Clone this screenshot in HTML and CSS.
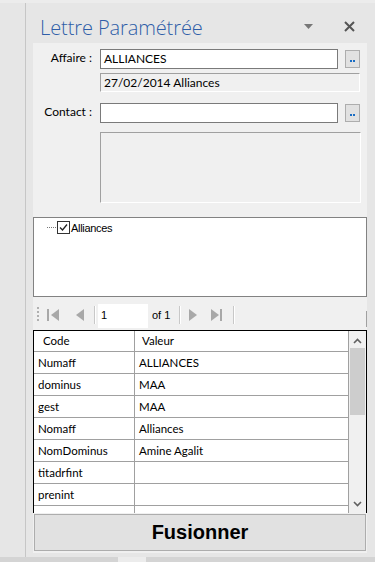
FILE: index.html
```html
<!DOCTYPE html>
<html lang="fr">
<head>
<meta charset="utf-8">
<title>Lettre Paramétrée</title>
<link rel="stylesheet" href="styles.css">
</head>
<body>
<div class="topband"></div>
<div class="app">
  <div class="gutter"></div>
  <div class="vline"></div>
  <div class="pane">
    <div class="pane-head">
      <h1 class="title">Lettre Paramétrée</h1>
      <div class="head-icons">
        <svg class="drop" width="9" height="5" viewBox="0 0 9 5"><path d="M0 0H9L4.5 5Z" fill="#777"/></svg>
        <svg class="close" width="11" height="11" viewBox="0 0 11 11"><path d="M1 1L10 10M10 1L1 10" stroke="#555" stroke-width="2"/></svg>
      </div>
    </div>
    <div class="content">
      <div class="form">
        <div class="frow">
          <label class="flabel">Affaire :</label>
          <div class="finput">ALLIANCES</div>
          <div class="dots-btn"><svg width="5" height="2" viewBox="0 0 5 2"><rect x="0" y="0" width="2" height="2" fill="#1a6dc4"/><rect x="3" y="0" width="2" height="2" fill="#1a6dc4"/></svg></div>
        </div>
        <div class="infobox">27/02/2014 Alliances</div>
        <div class="frow contact">
          <label class="flabel">Contact :</label>
          <div class="finput"></div>
          <div class="dots-btn"><svg width="5" height="2" viewBox="0 0 5 2"><rect x="0" y="0" width="2" height="2" fill="#1a6dc4"/><rect x="3" y="0" width="2" height="2" fill="#1a6dc4"/></svg></div>
        </div>
        <div class="bigbox"></div>
      </div>
      <div class="tree">
        <div class="tree-item">
          <span class="tree-dots"></span>
          <span class="check"><svg width="11" height="11" viewBox="0 0 11 11"><path d="M2 5.5L4.5 8L9 2.5" fill="none" stroke="#222" stroke-width="1.3"/></svg></span>
          <span class="tree-text">Alliances</span>
        </div>
      </div>
      <div class="toolbar">
        <span class="grip"></span>
        <span class="tb-btn first"><svg width="13" height="12" viewBox="0 0 13 12"><rect x="0" y="0" width="2" height="12" fill="#a8a8a8"/><path d="M12 0V12L4 6Z" fill="#a8a8a8"/></svg></span>
        <span class="tb-btn prev"><svg width="8" height="12" viewBox="0 0 8 12"><path d="M8 0V12L0 6Z" fill="#a8a8a8"/></svg></span>
        <span class="tb-sep"></span>
        <span class="tb-page">1</span>
        <span class="tb-of">of 1</span>
        <span class="tb-sep"></span>
        <span class="tb-btn next"><svg width="8" height="12" viewBox="0 0 8 12"><path d="M0 0V12L8 6Z" fill="#a8a8a8"/></svg></span>
        <span class="tb-btn last"><svg width="12" height="12" viewBox="0 0 12 12"><path d="M0 0V12L8 6Z" fill="#a8a8a8"/><rect x="9" y="0" width="2" height="12" fill="#a8a8a8"/></svg></span>
        <span class="tb-sep"></span>
        <span class="tb-end"></span>
      </div>
      <div class="grid">
        <div class="grid-body">
          <div class="grow ghead"><div class="c1">Code</div><div class="c2">Valeur</div></div>
          <div class="grow"><div class="c1">Numaff</div><div class="c2">ALLIANCES</div></div>
          <div class="grow"><div class="c1">dominus</div><div class="c2">MAA</div></div>
          <div class="grow"><div class="c1">gest</div><div class="c2">MAA</div></div>
          <div class="grow"><div class="c1">Nomaff</div><div class="c2">Alliances</div></div>
          <div class="grow"><div class="c1">NomDominus</div><div class="c2">Amine Agalit</div></div>
          <div class="grow"><div class="c1">titadrfint</div><div class="c2"></div></div>
          <div class="grow"><div class="c1">prenint</div><div class="c2"></div></div>
          <div class="grow"><div class="c1"></div><div class="c2"></div></div>
        </div>
        <div class="vscroll">
          <svg class="arr" width="9" height="6" viewBox="0 0 9 6"><path d="M1 5L4.5 1.5L8 5" fill="none" stroke="#606060" stroke-width="1.6"/></svg>
          <div class="thumb"></div>
          <div class="track"></div>
          <svg class="arr" width="9" height="6" viewBox="0 0 9 6"><path d="M1 1L4.5 4.5L8 1" fill="none" stroke="#606060" stroke-width="1.6"/></svg>
        </div>
      </div>
      <button class="merge">Fusionner</button>
    </div>
  </div>
</div>
<div class="bottombar"><span class="bthumb"></span></div>
</body>
</html>
```

FILE: styles.css
```css
* { box-sizing: border-box; }
html, body { margin: 0; padding: 0; }
body {
  width: 375px;
  height: 562px;
  overflow: hidden;
  background: #e6e6e6;
  font-family: Lato, "Open Sans", sans-serif;
  font-size: 12px;
  color: #000;
}
.topband { height: 3px; background: #ececec; }
.app { display: flex; height: 554px; }
.gutter { width: 25px; }
.vline { width: 1px; background: #c6c6c6; }
.pane { width: 349px; display: flex; flex-direction: column; }
.pane-head {
  height: 40px;
  display: flex;
  align-items: flex-start;
  justify-content: space-between;
  padding-left: 14px;
}
.title {
  margin: 12px 0 0 0;
  font-family: "Open Sans", sans-serif;
  font-weight: 300;
  font-size: 20px;
  line-height: 26px;
  color: #2f5ea8;
  letter-spacing: -0.1px;
}
.head-icons { display: flex; align-items: center; margin-top: 18px; }
.drop { margin-right: 31px; }
.close { margin-right: 20px; }

.content {
  margin-left: 7px;
  width: 334px;
  background: #f0f0f0;
  display: flex;
  flex-direction: column;
  padding-bottom: 2px;
}
.form { padding-top: 6px; height: 174px; }
.frow { display: flex; align-items: flex-start; }
.flabel {
  width: 67px;
  padding-right: 8px;
  text-align: right;
  line-height: 16px;
  padding-top: 1px;
}
.finput {
  width: 238px;
  height: 20px;
  border: 1px solid #7a7a7a;
  background: #fff;
  padding-left: 3px;
  line-height: 18px;
}
.dots-btn {
  margin-left: 7px;
  margin-top: 1px;
  width: 15px;
  height: 18px;
  border: 1px solid #adadad;
  background: #e1e1e1;
  display: flex;
  align-items: flex-end;
  justify-content: center;
  padding-bottom: 5px;
}
.infobox {
  margin: 4px 0 0 67px;
  width: 260px;
  height: 19px;
  border-top: 1px solid #a0a0a0;
  border-left: 1px solid #a0a0a0;
  border-right: 1px solid #fff;
  border-bottom: 1px solid #fff;
  padding-left: 3px;
  line-height: 17px;
}
.contact { margin-top: 11px; }
.bigbox {
  margin: 9px 0 0 67px;
  width: 261px;
  height: 71px;
  border-top: 1px solid #a0a0a0;
  border-left: 1px solid #a0a0a0;
  border-right: 1px solid #fff;
  border-bottom: 1px solid #fff;
}

.tree {
  height: 80px;
  border: 1px solid #828282;
  background: #fff;
  padding: 3px 0 0 13px;
}
.tree-item { display: flex; align-items: center; height: 13px; }
.tree-dots {
  width: 10px;
  height: 1px;
  background: repeating-linear-gradient(90deg, #777 0 1px, transparent 1px 2px);
}
.check {
  width: 13px;
  height: 13px;
  border: 1px solid #333;
  background: #fff;
  display: flex;
  align-items: center;
  justify-content: center;
}
.tree-text {
  margin-left: 1px;
  font-family: "Liberation Sans", Arial, sans-serif;
  font-size: 11px;
  letter-spacing: -0.3px;
}

.toolbar {
  height: 33px;
  display: flex;
  align-items: center;
  padding-left: 4px;
  font-family: "Liberation Sans", Arial, sans-serif;
  font-size: 11px;
}
.grip {
  width: 2px;
  height: 16px;
  margin-top: 2px;
  background: repeating-linear-gradient(180deg, #b0b0b0 0 2px, transparent 2px 4px);
  margin-right: 6px;
}
.tb-btn { display: flex; align-items: center; margin-top: 3px; }
.first { margin-left: 2px; }
.prev { margin-left: 16px; }
.tb-sep {
  width: 1px;
  height: 18px;
  margin-top: 2px;
  background: #c8c8c8;
  box-shadow: 1px 0 0 #fff;
}
.prev + .tb-sep { margin-left: 10px; }
.tb-page {
  margin-left: 3px;
  width: 50px;
  height: 24px;
  margin-top: 5px;
  background: #fff;
  padding-left: 3px;
  line-height: 22px;
}
.tb-of { margin-left: 4px; width: 27px; margin-top: 3px; }
.next { margin-left: 9px; }
.last { margin-left: 14px; }
.last + .tb-sep { margin-left: 10px; }
.tb-end {
  margin-left: auto;
  width: 1px;
  height: 16px;
  margin-top: 10px;
  background: #a0a0a0;
}

.grid {
  height: 183px;
  border: 1px solid #000;
  border-bottom: none;
  display: flex;
  overflow: hidden;
  background: #fff;
  font-size: 11.5px;
}
.grid-body { width: 315px; }
.grow {
  display: flex;
  height: 22px;
  border-bottom: 1px solid #a0a0a0;
  line-height: 21px;
}
.ghead { height: 21px; line-height: 20px; }
.c1 {
  width: 101px;
  border-right: 1px solid #a0a0a0;
  padding-left: 4px;
  white-space: nowrap;
}
.c2 {
  width: 214px;
  border-right: 1px solid #a0a0a0;
  padding-left: 4px;
  white-space: nowrap;
}
.ghead .c1 { padding-left: 9px; }
.ghead .c2 { padding-left: 7px; }
.vscroll {
  width: 17px;
  background: #f0f0f0;
  display: flex;
  flex-direction: column;
  align-items: center;
}
.arr { margin: 7px 0 4px; flex: none; }
.vscroll .arr:last-child { margin: 4px 0 6px; }
.thumb { width: 15px; height: 67px; background: #cdcdcd; flex: none; }
.track { flex: 1; }

.merge {
  margin: 1px 0 0 1px;
  width: 332px;
  height: 37px;
  border: 1px solid #adadad;
  background: #e1e1e1;
  font-family: "Liberation Sans", Arial, sans-serif;
  font-weight: bold;
  font-size: 20px;
  color: #000;
  padding: 0;
}
.bottombar {
  height: 5px;
  background: #d4d4d4;
  position: relative;
}
.bthumb {
  position: absolute;
  left: 118px;
  top: 0;
  width: 28px;
  height: 5px;
  background: #ececec;
}
```
